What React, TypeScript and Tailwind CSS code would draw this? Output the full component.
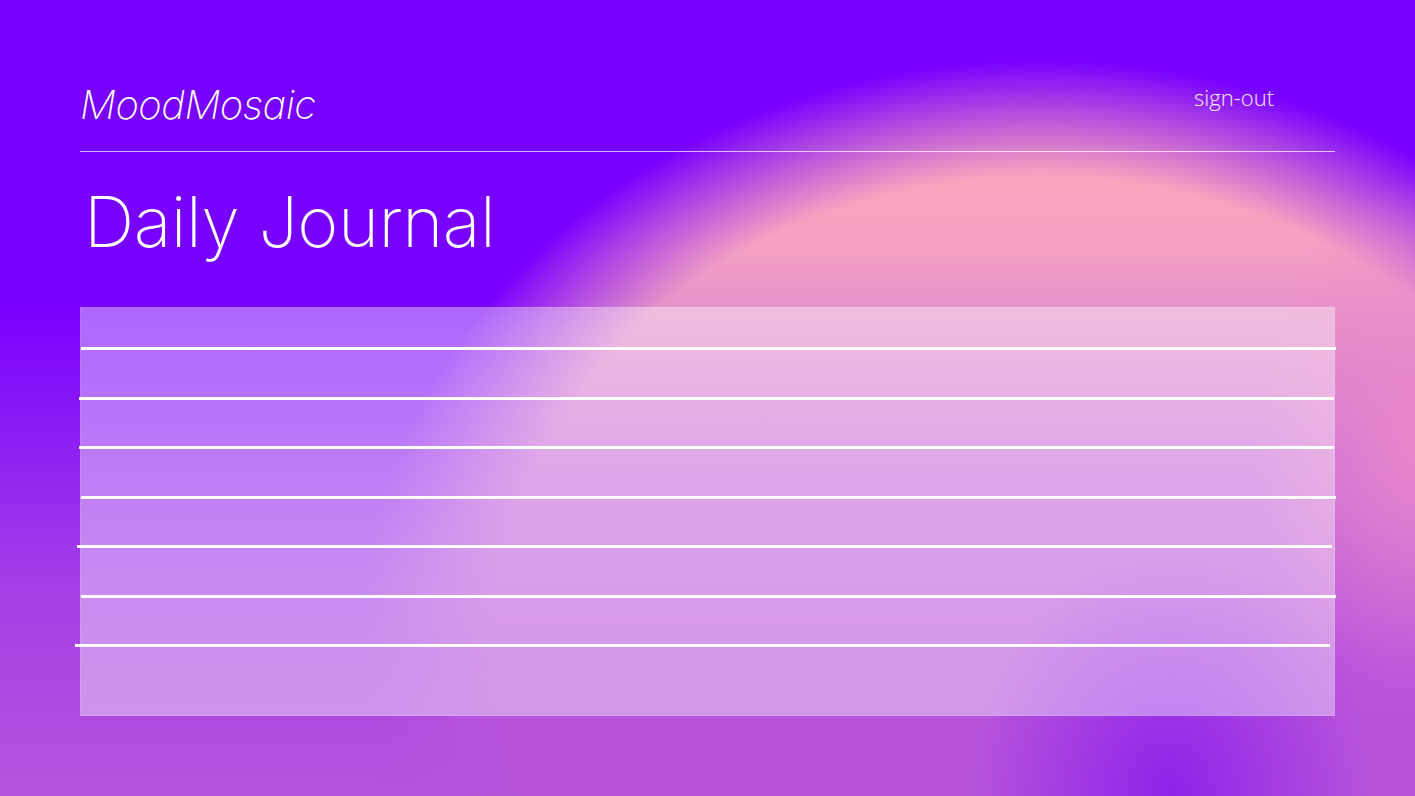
const lines = [
  "ml-0 mr-[-2px]",
  "ml-[-2px] mr-0",
  "ml-[-2px] mr-0",
  "ml-0 mr-[-2px]",
  "ml-[-4px] mr-[2px]",
  "ml-0 mr-[-2px]",
  "ml-[-6px] mr-[4px]",
];

const App = () => {
  return (
    <div className="relative w-full min-h-[796px] h-screen overflow-hidden bg-[#7700ff] font-['Inter',sans-serif] text-white">
      {/* backdrop */}
      <div className="absolute inset-0 bg-[linear-gradient(180deg,#7700ff_0%,#7800ff_38%,#a440e6_74%,#b653dc_100%)]" />
      <div className="absolute inset-0 bg-[linear-gradient(180deg,#fca9b8_14%,#f4a1c3_31%,#df88cc_44%,#cb6ed9_57%,#b955dc_82%,#b653da_100%)] [mask-image:radial-gradient(ellipse_680px_580px_at_1040px_640px,#000_80%,transparent_100%)]" />
      <div className="absolute inset-0 bg-[radial-gradient(ellipse_160px_260px_at_1415px_440px,rgba(236,140,200,0.85)_0%,rgba(236,140,200,0)_100%)]" />
      <div className="absolute inset-0 bg-[radial-gradient(ellipse_200px_240px_at_1170px_790px,rgba(140,30,235,0.9)_0%,rgba(140,30,235,0)_100%)]" />

      <div className="relative px-[80px] pt-[78px]">
        <header className="flex items-start justify-between">
          <div className="text-[40px] leading-[54px] italic font-extralight tracking-[-0.5px]">
            MoodMosaic
          </div>
          <button className="mr-[61px] mt-[3px] text-[22px] font-light text-white/90 font-['Open_Sans',sans-serif]">
            sign-out
          </button>
        </header>
        <div className="mt-[19px] h-px bg-white/70" />

        <h1 className="mt-[30px] ml-[4px] text-[70px] leading-[80px] font-extralight tracking-[-0.5px]">
          Daily Journal
        </h1>

        <section className="mt-[45px] h-[409px] bg-white/40 border border-white/10 pt-[39px]">
          <div className="flex flex-col gap-[46.5px]">
            {lines.map((cls, i) => (
              <div key={i} className={`h-[3px] bg-white ${cls}`} />
            ))}
          </div>
        </section>
      </div>
    </div>
  );
};

export default App;
